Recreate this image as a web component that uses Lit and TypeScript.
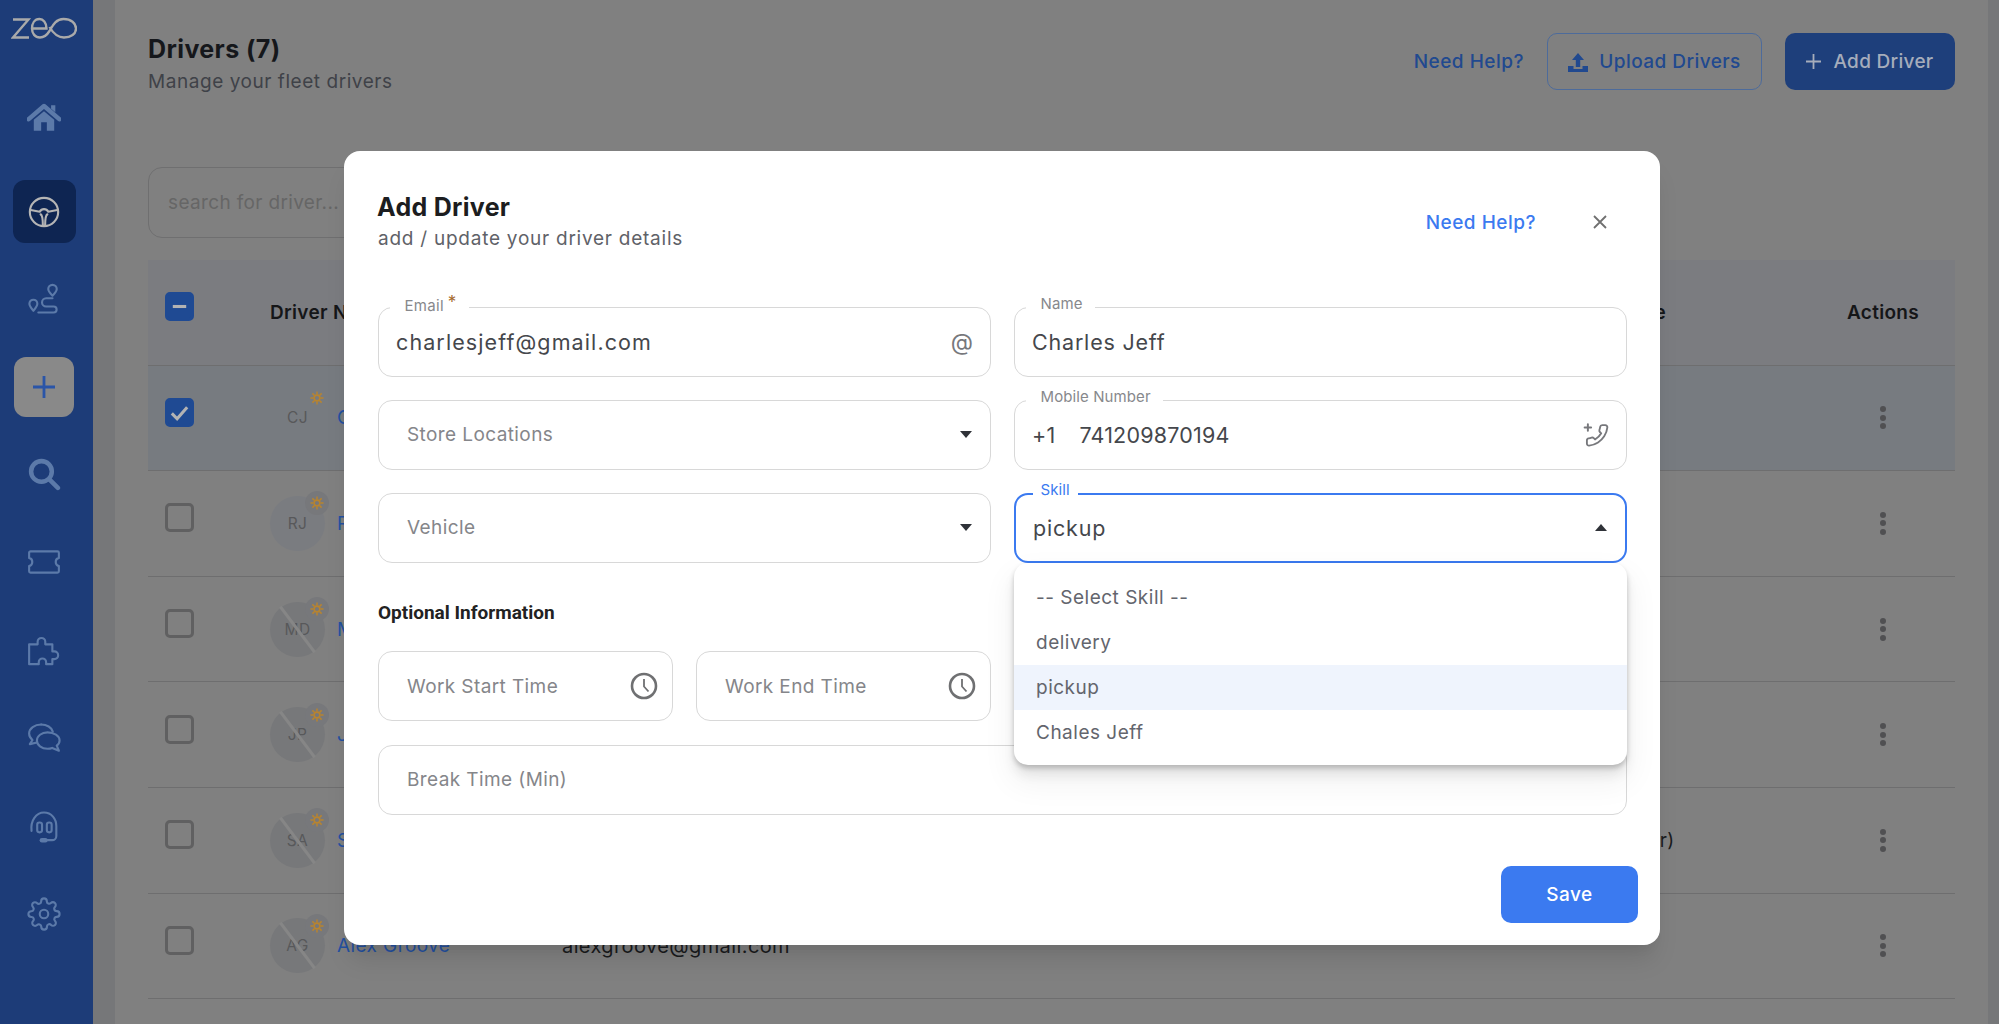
import { LitElement, html, css, svg } from 'lit';
import { customElement } from 'lit/decorators.js';

interface Driver {
  initials: string;
  name: string;
  email: string;
  vehicle: string;
  selected?: boolean;
  avatar: 'plain' | 'tint' | 'none';
}

const DRIVERS: Driver[] = [
  { initials: 'CJ', name: 'Charles Jeff', email: 'charlesjeff@gmail.com', vehicle: 'Truck', selected: true, avatar: 'plain' },
  { initials: 'RJ', name: 'Robert James', email: 'robertjames@gmail.com', vehicle: 'Van', avatar: 'tint' },
  { initials: 'MD', name: 'Mark Davis', email: 'markdavis@gmail.com', vehicle: 'Truck', avatar: 'none' },
  { initials: 'JP', name: 'John Parker', email: 'johnparker@gmail.com', vehicle: 'Van', avatar: 'none' },
  { initials: 'SA', name: 'Sam Adams', email: 'samadams@gmail.com', vehicle: 'EV (Car)', avatar: 'none' },
  { initials: 'AG', name: 'Alex Groove', email: 'alexgroove@gmail.com', vehicle: '', avatar: 'none' },
];

const navIcon = (body: unknown) => html`<svg class="nav-icon" viewBox="0 0 24 24">${body}</svg>`;

const ICONS = {
  home: svg`<path class="solid" d="M4.800 13.200 12 7.200l7.200 6V21H14v-6h-4v6H4.800z" /><path class="thick" d="M1.200 12.800 12 3.600l10.800 9.200" /><path class="solid" d="M17 3h3v5l-3-2.500z" />`,
  wheel: svg`<circle cx="12" cy="12" r="10" /><path d="M2.600 10.600l6.400 1.200a3.400 3.400 0 0 1 6 0l6.400-1.200" /><path d="M9.600 13.600c1 .6 1.600 3.200 1.600 7.600M14.400 13.600c-1 .6-1.600 3.200-1.600 7.600" />`,
  route: svg`<path d="M18 2a3 3 0 0 1 3 3c0 1.800-3 4.700-3 4.700s-3-2.900-3-4.700a3 3 0 0 1 3-3z" /><path d="M18 11.500h-4.500a2.900 2.900 0 0 0 0 5.800h5.300a2.100 2.100 0 0 1 0 4.200H8" /><path d="M4.500 12.500a2.800 2.800 0 0 1 2.800 2.800c0 1.700-2.800 5-2.800 5s-2.800-3.300-2.800-5a2.800 2.800 0 0 1 2.800-2.800z" />`,
  search: svg`<circle class="thick" cx="10.200" cy="10.200" r="7.300" /><path class="thick" d="M15.800 15.800 21.800 21.800" />`,
  ticket: svg`<path d="M1.500 5.500a1 1 0 0 1 1-1h19a1 1 0 0 1 1 1v3.600a3 3 0 0 0 0 5.800v3.600a1 1 0 0 1-1 1h-19a1 1 0 0 1-1-1v-3.600a3 3 0 0 0 0-5.800z" />`,
  puzzle: svg`<path d="M1.500 8h6V6.200a2.700 2.700 0 0 1 5.400 0V8h5v5h1.400a2.700 2.700 0 0 1 0 5.400h-1.400V22h-4.400v-1.400a2.600 2.600 0 0 0-5.200 0V22H1.500z" />`,
  chat: svg`<path d="M10 2.500c-4.600 0-8.500 2.700-8.500 6.400 0 1.800 1 3.400 2.400 4.500L2 16.300l5-1.100" /><path d="M10 2.500c4 0 7.400 2 8.200 5" /><path d="M14.500 8c-4.200 0-7.500 2.600-7.500 5.800s3.300 5.800 7.500 5.800c1.200 0 2.300-.2 3.300-.6l4.700 2-1.500-3.600c1.300-1 2-2.300 2-3.700C23 10.500 19 8 14.500 8z" />`,
  headset: svg`<path d="M3.200 15.500C2.300 8 6.500 2.500 12 2.500c5.300 0 8.700 4.500 8.700 9.500v7a3 3 0 0 1-3 3h-4.500" /><rect x="7.200" y="9.500" width="3.400" height="7" rx="1.600" /><rect x="14" y="9.500" width="3.400" height="7" rx="1.600" /><path class="thick" d="M10.500 22h2.500" />`,
  gear: svg`<circle cx="12" cy="12" r="3" /><path d="M19.400 15a1.650 1.650 0 0 0 .33 1.820l.06.06a2 2 0 0 1 0 2.830 2 2 0 0 1-2.830 0l-.06-.06a1.650 1.650 0 0 0-1.820-.33 1.650 1.650 0 0 0-1 1.510V21a2 2 0 0 1-2 2 2 2 0 0 1-2-2v-.09A1.650 1.650 0 0 0 9 19.400a1.650 1.650 0 0 0-1.820.33l-.06.06a2 2 0 0 1-2.830 0 2 2 0 0 1 0-2.830l.06-.06a1.650 1.650 0 0 0 .33-1.820 1.650 1.650 0 0 0-1.510-1H3a2 2 0 0 1-2-2 2 2 0 0 1 2-2h.09A1.650 1.650 0 0 0 4.600 9a1.650 1.650 0 0 0-.33-1.820l-.06-.06a2 2 0 0 1 0-2.830 2 2 0 0 1 2.830 0l.06.06a1.650 1.650 0 0 0 1.820.33H9a1.650 1.650 0 0 0 1-1.510V3a2 2 0 0 1 2-2 2 2 0 0 1 2 2v.09a1.650 1.650 0 0 0 1 1.510 1.650 1.650 0 0 0 1.820-.33l.06-.06a2 2 0 0 1 2.830 0 2 2 0 0 1 0 2.830l-.06.06a1.650 1.650 0 0 0-.33 1.820V9a1.650 1.650 0 0 0 1.510 1H21a2 2 0 0 1 2 2 2 2 0 0 1-2 2h-.09a1.650 1.650 0 0 0-1.510 1z" />`,
};

const sun = html`<svg class="sun" viewBox="0 0 16 16" fill="none" stroke="#b8842f">
  <circle cx="8" cy="8" r="3.300" stroke-width="1.800" />
  <path stroke-width="1.700" d="M8 .5v3.500M8 12v3.500M.5 8H4M12 8h3.500M2.700 2.700l2.500 2.500M10.800 10.800l2.500 2.500M13.300 2.700l-2.500 2.500M5.200 10.800l-2.500 2.500" />
</svg>`;

const clock = html`<svg class="clock" viewBox="0 0 28 28">
  <circle cx="14" cy="14" r="12" fill="none" stroke="#6f7072" stroke-width="2.600" />
  <path d="M14 7v7.500l4.500 5" fill="none" stroke="#6f7072" stroke-width="1.800" />
</svg>`;

@customElement('app-root')
export class AppRoot extends LitElement {
  static styles = css`
    :host {
      display: block;
      height: 1024px;
      overflow: hidden;
      position: relative;
      font-family: 'Inter', 'Noto Sans', sans-serif;
      background: #808080;
    }
    .page {
      display: flex;
      height: 1024px;
    }
    .sidebar {
      width: 93px;
      flex: none;
      background: #1d3c78;
      display: flex;
      flex-direction: column;
      align-items: center;
      padding: 17px 5px 0 0;
      box-sizing: border-box;
    }
    .logo {
      width: 66px;
      height: 24px;
      margin-bottom: 45.500px;
    }
    .nav-icon {
      width: 34px;
      height: 34px;
      fill: none;
      stroke: #5c7aa9;
      stroke-width: 1.500;
      stroke-linecap: round;
      stroke-linejoin: round;
    }
    .nav-icon .solid {
      fill: #5c7aa9;
      stroke: none;
    }
    .nav-icon .thick {
      stroke-width: 3.200;
    }
    .nav-item {
      width: 63px;
      height: 63px;
      flex: none;
      display: flex;
      align-items: center;
      justify-content: center;
      border-radius: 12px;
      margin-bottom: 25px;
    }
    .nav-item.home {
      margin-bottom: 30.500px;
    }
    .nav-item.active {
      background: #0e2552;
      margin-bottom: 24.500px;
    }
    .nav-item.active .nav-icon {
      stroke: #b5b5b5;
    }
    .nav-item.route {
      margin-bottom: 26.500px;
    }
    .nav-item.add {
      width: 60px;
      height: 60px;
      background: #898989;
      margin-bottom: 25.500px;
    }
    .nav-item.add svg {
      width: 24px;
      height: 24px;
      stroke: #2a55a8;
      stroke-width: 2.800;
      fill: none;
    }
    .strip {
      width: 22px;
      flex: none;
      background: #767779;
    }
    .strip.right {
      width: 11px;
    }
    .main {
      flex: 1;
      min-width: 0;
      padding: 33px 33px 0;
    }
    .top {
      display: flex;
      justify-content: space-between;
      align-items: flex-start;
    }
    h1 {
      margin: 0;
      font-size: 25px;
      line-height: 32px;
      font-weight: 700;
      letter-spacing: 0.4px;
      color: #15171b;
    }
    .top p {
      margin: 4px 0 0;
      font-size: 19px;
      line-height: 26px;
      letter-spacing: 0.55px;
      color: #3f4248;
    }
    .actions {
      display: flex;
      align-items: center;
    }
    .help {
      font-size: 19px;
      font-weight: 500;
      letter-spacing: 0.5px;
      color: #21498f;
      margin-right: 23px;
    }
    .btn {
      height: 57px;
      box-sizing: border-box;
      border-radius: 10px;
      display: flex;
      align-items: center;
      justify-content: center;
      font-size: 19px;
      font-weight: 500;
    }
    .btn.outline {
      width: 215px;
      border: 1.500px solid #4d6b9b;
      color: #21498f;
      margin-right: 23px;
      gap: 11px;
      letter-spacing: 0.45px;
    }
    .btn.solid {
      width: 170px;
      background: #1e3f7b;
      color: #a6adbb;
      gap: 12px;
      letter-spacing: 0.3px;
    }
    .search {
      margin-top: 72px;
      width: 350px;
      height: 71px;
      box-sizing: border-box;
      border: 1.500px solid #6f6f70;
      border-radius: 14px;
      padding: 0 19px;
      display: flex;
      align-items: center;
      font-size: 19px;
      letter-spacing: 0.35px;
      color: #666;
    }
    .table {
      margin-top: 22px;
    }
    .row {
      display: grid;
      grid-template-columns: 122px 67px 225px 1034px 251px 1fr;
      height: 105.600px;
      align-items: center;
      box-sizing: border-box;
      border-bottom: 1.500px solid #6e6e6f;
      font-size: 19px;
      letter-spacing: 0.4px;
      color: #1a1b1d;
    }
    .row.head {
      background: #7b7c80;
      font-weight: 600;
      letter-spacing: 0.3px;
      color: #151618;
    }
    .row.head .wide {
      grid-column: span 2;
    }
    .row.selected {
      background: #777b80;
    }
    .mail {
      font-size: 20px;
    }
    .check {
      width: 29px;
      height: 29px;
      box-sizing: border-box;
      margin: 0 0 11px 17px;
      border: 3px solid #606061;
      border-radius: 5px;
      display: flex;
      align-items: center;
      justify-content: center;
    }
    .check.on {
      background: #1f4a93;
      border-color: #1f4a93;
    }
    .check svg {
      width: 23px;
      height: 23px;
      fill: none;
      stroke: #b3b3b3;
      stroke-width: 3.200;
    }
    .avatar {
      position: relative;
      width: 55px;
      height: 55px;
      border-radius: 50%;
      display: flex;
      align-items: center;
      justify-content: center;
      font-size: 15.500px;
      letter-spacing: 0.4px;
      color: #58585a;
    }
    .avatar.tint {
      background: #7a7c80;
    }
    .avatar.none {
      background: #77787a;
    }
    .avatar.none::after {
      content: '';
      position: absolute;
      left: -1px;
      right: -1px;
      top: 26px;
      height: 3px;
      background: #868686;
      transform: rotate(53deg);
    }
    .badge {
      position: absolute;
      left: 35px;
      top: -4.500px;
      width: 24px;
      height: 24px;
      border-radius: 50%;
      display: flex;
      align-items: center;
      justify-content: center;
      z-index: 1;
    }
    .avatar.tint .badge,
    .avatar.none .badge {
      background: #77787b;
    }
    .sun {
      width: 14px;
      height: 14px;
    }
    .name {
      color: #2450a0;
      white-space: nowrap;
    }
    .kebab {
      display: flex;
      flex-direction: column;
      gap: 2.500px;
      margin-left: 33px;
    }
    .kebab i {
      width: 6px;
      height: 6px;
      border-radius: 50%;
      background: #505052;
    }

    .modal {
      position: absolute;
      left: 344px;
      top: 151px;
      width: 1316px;
      height: 794px;
      box-sizing: border-box;
      background: #fff;
      border-radius: 16px;
      padding: 41px 33px 22px 34px;
      box-shadow: 0 20px 25px -5px rgba(0, 0, 0, 0.1), 0 10px 10px -5px rgba(0, 0, 0, 0.04);
      display: flex;
      flex-direction: column;
    }
    .m-head {
      display: flex;
      justify-content: space-between;
      align-items: center;
      padding-right: 20px;
    }
    .m-head h2 {
      margin: -1px 0 1px -1px;
      font-size: 25px;
      line-height: 32px;
      font-weight: 700;
      letter-spacing: 0.3px;
      color: #1c1d20;
    }
    .m-head p {
      margin: 3px 0 0;
      font-size: 19px;
      line-height: 26px;
      letter-spacing: 0.75px;
      color: #5f6268;
    }
    .m-right {
      display: flex;
      align-items: center;
      gap: 57px;
    }
    .m-help {
      font-size: 19px;
      font-weight: 500;
      letter-spacing: 0.5px;
      color: #3b7af0;
    }
    .close {
      width: 14px;
      height: 14px;
      stroke: #707070;
      stroke-width: 1.800;
      fill: none;
    }
    .grid {
      display: grid;
      grid-template-columns: 613px 613px;
      column-gap: 23px;
      row-gap: 23px;
      margin-top: 54.500px;
    }
    .field {
      position: relative;
      height: 70px;
      flex: none;
      box-sizing: border-box;
      border: 1.500px solid #d8d8d8;
      border-radius: 14px;
      padding: 0 17px;
      display: flex;
      align-items: center;
      justify-content: space-between;
      font-size: 21.500px;
      letter-spacing: 0.8px;
      color: #45474c;
    }
    .field.mail-field {
      letter-spacing: 1.100px;
    }
    .field.focus {
      border: 2.500px solid #3b7af0;
      z-index: 2;
    }
    .field.ph {
      padding-left: 28px;
      font-size: 19px;
      letter-spacing: 0.4px;
      color: #85868a;
    }
    .label {
      position: absolute;
      left: 10.500px;
      top: -11.500px;
      padding: 0 12px 0 15px;
      background: #fff;
      font-size: 15px;
      line-height: 16px;
      letter-spacing: 0.1px;
      color: #87888c;
    }
    .mail-field .label {
      top: -9.500px;
      letter-spacing: 0.3px;
    }
    .focus .label {
      left: 16.500px;
      top: -12.500px;
      padding: 0 8px;
      color: #3b7af0;
    }
    .req {
      color: #a5692a;
      font-size: 17px;
      line-height: 0;
      position: relative;
      top: -3px;
      margin-left: 4px;
    }
    .caret {
      width: 0;
      height: 0;
      border-left: 6.500px solid transparent;
      border-right: 6.500px solid transparent;
      border-top: 7px solid #2f3238;
      margin-right: 1px;
    }
    .caret.up {
      border-top: 0;
      border-bottom: 7px solid #2f3238;
    }
    .at {
      font-size: 23px;
      letter-spacing: 0;
      color: #77787c;
    }
    .phone {
      width: 26px;
      height: 26px;
      fill: none;
      stroke: #77787c;
      stroke-width: 1.800;
      stroke-linecap: round;
      stroke-linejoin: round;
    }
    .code {
      margin-right: 24px;
      letter-spacing: 0.2px;
    }
    .grow {
      flex: 1;
      letter-spacing: 0.2px;
    }
    h3 {
      margin: 38px 0 0;
      font-family: 'Roboto', sans-serif;
      font-size: 19px;
      line-height: 24px;
      font-weight: 700;
      color: #222;
    }
    .times {
      display: flex;
      gap: 23px;
      width: 613px;
      margin-top: 26.500px;
    }
    .times .field {
      flex: 1;
      padding-right: 14px;
    }
    .clock {
      width: 28px;
      height: 28px;
    }
    .break {
      margin-top: 23.500px;
    }
    .dropdown {
      position: absolute;
      left: -2px;
      right: -2px;
      top: calc(100% + 2px);
      height: 202px;
      box-sizing: border-box;
      padding-top: 12px;
      background: #fff;
      border-radius: 14px;
      box-shadow: 0 3px 5px rgba(0, 0, 0, 0.2), 0 10px 12px rgba(0, 0, 0, 0.08), 0 15px 30px 5px rgba(0, 0, 0, 0.05);
    }
    .dropdown div {
      height: 45px;
      display: flex;
      align-items: center;
      padding-left: 22px;
      font-size: 19px;
      letter-spacing: 0.5px;
      color: #63656d;
    }
    .dropdown .hl {
      background: #eff4fd;
    }
    .foot {
      margin-top: auto;
      display: flex;
      justify-content: flex-end;
      margin-right: -11px;
    }
    .save {
      width: 137px;
      height: 57px;
      border-radius: 10px;
      background: #3b7af0;
      color: #fff;
      display: flex;
      align-items: center;
      justify-content: center;
      font-size: 19px;
      font-weight: 500;
      letter-spacing: 0.5px;
    }
  `;

  private renderRow(d: Driver) {
    return html`
      <div class="row ${d.selected ? 'selected' : ''}">
        <div class="check ${d.selected ? 'on' : ''}">
          ${d.selected ? html`<svg viewBox="0 0 24 24"><path d="M4 13l5.500 5.500L20 6.500" /></svg>` : ''}
        </div>
        <div class="avatar ${d.avatar}">
          ${d.initials}
          <span class="badge">${sun}</span>
        </div>
        <div class="name">${d.name}</div>
        <div class="mail">${d.email}</div>
        <div>${d.vehicle}</div>
        <div class="kebab"><i></i><i></i><i></i></div>
      </div>
    `;
  }

  private renderPage() {
    return html`
      <div class="page">
        <nav class="sidebar">
          <svg class="logo" viewBox="0 0 66 24" fill="none" stroke="#aaaaaa" stroke-width="2.400">
            <path d="M2 2.500H17.500L2 20.500H18" />
            <path d="M22 11.500H35.500C35.500 5.500 32 2 28.500 2 23.500 2 21 6.500 21 11.500 21 16.500 24 20.500 29 20.500 33 20.500 36 18 38.500 14 41.500 9 44.500 2 52.500 2 60 2 65 6 65 11.500 65 17 60 20.500 53 20.500 46 20.500 42 16 38.500 10" />
          </svg>
          <div class="nav-item home">${navIcon(ICONS.home)}</div>
          <div class="nav-item active">${navIcon(ICONS.wheel)}</div>
          <div class="nav-item route">${navIcon(ICONS.route)}</div>
          <div class="nav-item add"><svg viewBox="0 0 24 24"><path d="M12 1v22M1 12h22" /></svg></div>
          <div class="nav-item">${navIcon(ICONS.search)}</div>
          <div class="nav-item">${navIcon(ICONS.ticket)}</div>
          <div class="nav-item">${navIcon(ICONS.puzzle)}</div>
          <div class="nav-item">${navIcon(ICONS.chat)}</div>
          <div class="nav-item">${navIcon(ICONS.headset)}</div>
          <div class="nav-item">${navIcon(ICONS.gear)}</div>
        </nav>
        <div class="strip"></div>
        <main class="main">
          <div class="top">
            <div>
              <h1>Drivers (7)</h1>
              <p>Manage your fleet drivers</p>
            </div>
            <div class="actions">
              <span class="help">Need Help?</span>
              <div class="btn outline">
                <svg width="20" height="24" viewBox="0 0 20 24" fill="#21498f">
                  <path d="M10 3l6 7h-3.800v7H7.800v-7H4z" /><path d="M0 16h5.500v3h9v-3H20v6H0z" />
                </svg>
                Upload Drivers
              </div>
              <div class="btn solid">
                <svg width="15" height="15" viewBox="0 0 15 15" stroke="#a6adbb" stroke-width="1.800"><path d="M7.500 0v15M0 7.500h15" /></svg>
                Add Driver
              </div>
            </div>
          </div>
          <div class="search">search for driver...</div>
          <div class="table">
            <div class="row head">
              <div class="check on">
                <svg viewBox="0 0 24 24"><path d="M5 12h14" /></svg>
              </div>
              <div class="wide">Driver Name</div>
              <div>Email</div>
              <div>Vehicle</div>
              <div>Actions</div>
            </div>
            ${DRIVERS.map((d) => this.renderRow(d))}
          </div>
        </main>
        <div class="strip right"></div>
      </div>
    `;
  }

  private renderModal() {
    return html`
      <div class="modal">
        <div class="m-head">
          <div>
            <h2>Add Driver</h2>
            <p>add / update your driver details</p>
          </div>
          <div class="m-right">
            <span class="m-help">Need Help?</span>
            <svg class="close" viewBox="0 0 14 14"><path d="M1 1l12 12M13 1L1 13" /></svg>
          </div>
        </div>
        <div class="grid">
          <div class="field mail-field">
            <span class="label">Email<span class="req">*</span></span>
            charlesjeff@gmail.com
            <span class="at">@</span>
          </div>
          <div class="field">
            <span class="label">Name</span>
            Charles Jeff
          </div>
          <div class="field ph">Store Locations <span class="caret"></span></div>
          <div class="field">
            <span class="label">Mobile Number</span>
            <span class="code">+1</span>
            <span class="grow">741209870194</span>
            <svg class="phone" viewBox="0 0 24 24">
              <g transform="translate(24.500 1) scale(-0.95 0.95)">
                <path d="M22 16.920v3a2 2 0 0 1-2.180 2 19.790 19.790 0 0 1-8.630-3.070 19.500 19.500 0 0 1-6-6 19.790 19.790 0 0 1-3.070-8.670A2 2 0 0 1 4.110 2h3a2 2 0 0 1 2 1.720c.13.96.36 1.900.7 2.810a2 2 0 0 1-.45 2.110L8.090 9.910a16 16 0 0 0 6 6l1.270-1.270a2 2 0 0 1 2.110-.45c.91.34 1.850.57 2.810.7A2 2 0 0 1 22 16.920z" />
              </g>
              <path d="M1.500 5h6M4.500 2v6" />
            </svg>
          </div>
          <div class="field ph">Vehicle <span class="caret"></span></div>
          <div class="field focus">
            <span class="label">Skill</span>
            pickup
            <span class="caret up"></span>
            <div class="dropdown">
              <div>-- Select Skill --</div>
              <div>delivery</div>
              <div class="hl">pickup</div>
              <div>Chales Jeff</div>
            </div>
          </div>
        </div>
        <h3>Optional Information</h3>
        <div class="times">
          <div class="field ph">Work Start Time ${clock}</div>
          <div class="field ph">Work End Time ${clock}</div>
        </div>
        <div class="field ph break">Break Time (Min)</div>
        <div class="foot"><div class="save">Save</div></div>
      </div>
    `;
  }

  render() {
    return html`${this.renderPage()}${this.renderModal()}`;
  }
}
